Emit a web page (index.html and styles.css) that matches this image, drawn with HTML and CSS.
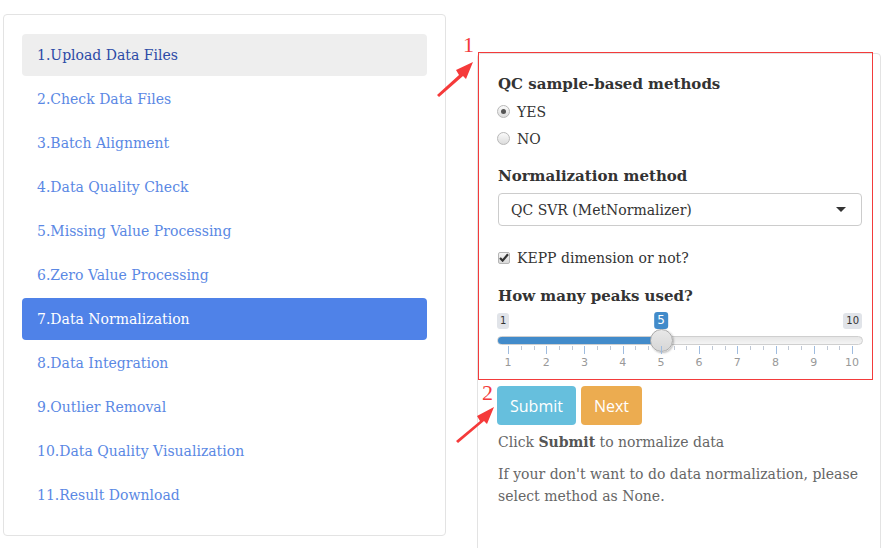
FILE: index.html
```html
<!DOCTYPE html>
<html>
<head>
<meta charset="utf-8">
<link rel="stylesheet" href="styles.css">
</head>
<body>
<div class="page">
  <div class="sidebar">
    <ul class="nav">
      <li class="nav-item first">1.Upload Data Files</li>
      <li class="nav-item">2.Check Data Files</li>
      <li class="nav-item">3.Batch Alignment</li>
      <li class="nav-item">4.Data Quality Check</li>
      <li class="nav-item">5.Missing Value Processing</li>
      <li class="nav-item">6.Zero Value Processing</li>
      <li class="nav-item active">7.Data Normalization</li>
      <li class="nav-item">8.Data Integration</li>
      <li class="nav-item">9.Outlier Removal</li>
      <li class="nav-item">10.Data Quality Visualization</li>
      <li class="nav-item">11.Result Download</li>
    </ul>
  </div>
  <div class="main">
    <div class="well">
      <div class="field-label">QC sample-based methods</div>
      <div class="radios">
        <label class="radio-row"><span class="radio checked"></span>YES</label>
        <label class="radio-row"><span class="radio"></span>NO</label>
      </div>
      <div class="field-label label2">Normalization method</div>
      <div class="select">
        <span>QC SVR (MetNormalizer)</span>
        <span class="caret"></span>
      </div>
      <label class="check-row">
        <span class="checkbox">
          <svg width="10" height="9" viewBox="0 0 10 9"><path d="M1 5 L3.6 7.6 L9 1.2" fill="none" stroke="#333" stroke-width="2.2"/></svg>
        </span>KEPP dimension or not?</label>
      <div class="field-label label3">How many peaks used?</div>
      <div class="slider">
        <span class="min-label">1</span>
        <span class="max-label">10</span>
        <span class="from-label" style="left: 163px">5</span>
        <div class="track"><div class="bar" style="width: 163px"></div></div>
        <div class="handle" style="left: 152px"></div>
        <div class="grid">
          <span class="tick major" style="left: 10px"></span><span class="tick" style="left: 22.7px"></span><span class="tick" style="left: 35.5px"></span>
          <span class="tick major" style="left: 48.2px"></span><span class="tick" style="left: 61px"></span><span class="tick" style="left: 73.7px"></span>
          <span class="tick major" style="left: 86.4px"></span><span class="tick" style="left: 99.2px"></span><span class="tick" style="left: 111.9px"></span>
          <span class="tick major" style="left: 124.7px"></span><span class="tick" style="left: 137.4px"></span><span class="tick" style="left: 150.1px"></span>
          <span class="tick major" style="left: 162.9px"></span><span class="tick" style="left: 175.6px"></span><span class="tick" style="left: 188.4px"></span>
          <span class="tick major" style="left: 201.1px"></span><span class="tick" style="left: 213.8px"></span><span class="tick" style="left: 226.6px"></span>
          <span class="tick major" style="left: 239.3px"></span><span class="tick" style="left: 252.1px"></span><span class="tick" style="left: 264.8px"></span>
          <span class="tick major" style="left: 277.6px"></span><span class="tick" style="left: 290.3px"></span><span class="tick" style="left: 303px"></span>
          <span class="tick major" style="left: 315.8px"></span><span class="tick" style="left: 328.5px"></span><span class="tick" style="left: 341.3px"></span>
          <span class="tick major" style="left: 354px"></span>
          <span class="num" style="left: 10px">1</span>
          <span class="num" style="left: 48.2px">2</span>
          <span class="num" style="left: 86.4px">3</span>
          <span class="num" style="left: 124.7px">4</span>
          <span class="num" style="left: 162.9px">5</span>
          <span class="num" style="left: 201.1px">6</span>
          <span class="num" style="left: 239.3px">7</span>
          <span class="num" style="left: 277.6px">8</span>
          <span class="num" style="left: 315.8px">9</span>
          <span class="num" style="left: 354px">10</span>
        </div>
      </div>
      <div class="buttons">
        <button class="btn btn-submit">Submit</button>
        <button class="btn btn-next">Next</button>
      </div>
      <p class="help">Click <b>Submit</b> to normalize data</p>
      <p class="help note">If your don't want to do data normalization, please select method as None.</p>

      <div class="redbox"></div>
      <span class="anno-num n1">1</span>
      <span class="anno-num n2">2</span>
      <svg class="arrow a1" width="50" height="50" viewBox="0 0 50 50">
        <polygon points="0,37 22,17 19,12 36,4 29,21 26,18 2,39" fill="#f53a3a"/>
      </svg>
      <svg class="arrow a2" width="50" height="50" viewBox="0 0 50 50">
        <polygon points="0,37 24,17 21,12 38,3 31,20 28,17 2,39" fill="#f53a3a"/>
      </svg>
    </div>
  </div>
</div>
</body>
</html>
```
FILE: styles.css
```css
* { box-sizing: border-box; }
html, body { margin: 0; padding: 0; background: #fff; }
body {
  font-family: "DejaVu Serif", "Liberation Serif", serif;
  font-size: 14px;
  color: #333;
  width: 883px;
  height: 548px;
  overflow: hidden;
}
.page {
  display: flex;
  align-items: flex-start;
  gap: 31px;
  padding: 14px 0 0 3px;
}
.sidebar {
  width: 443px;
  height: 522px;
  border: 1px solid #e3e3e3;
  border-radius: 4px;
  padding: 19px 18px 19px 18px;
  background: #fff;
}
.nav {
  list-style: none;
  margin: 0;
  padding: 0;
  display: flex;
  flex-direction: column;
  gap: 2px;
}
.nav-item {
  height: 42px;
  line-height: 42px;
  padding-left: 15px;
  border-radius: 4px;
  color: #5a88e4;
}
.nav-item.first {
  background: #eeeeee;
  color: #2c4aa6;
}
.nav-item.active {
  background: #4f82e8;
  color: #fff;
}
.main {
  width: 404px;
  margin-top: 39px;
}
.well {
  position: relative;
  height: 520px;
  border: 1px solid #e3e3e3;
  border-radius: 4px;
  background: #fff;
  padding: 19px 18px 0 20px;
}
.field-label {
  font-weight: bold;
  font-size: 15px;
  line-height: 22px;
}
.label2 { margin-top: 13px; }
.label3 { margin-top: 14px; }
.radios { margin-top: 3px; }
.radio-row, .check-row {
  display: flex;
  align-items: center;
  height: 27px;
  gap: 7px;
}
.radio {
  width: 13px;
  height: 13px;
  border-radius: 50%;
  border: 1px solid #b8b8b8;
  background: linear-gradient(#fafafa, #dcdcdc);
  position: relative;
  margin-left: -1px;
}
.radio.checked::after {
  content: "";
  position: absolute;
  left: 3px;
  top: 3px;
  width: 5px;
  height: 5px;
  border-radius: 50%;
  background: #555;
}
.select {
  margin-top: 6px;
  height: 33px;
  border: 1px solid #cccccc;
  border-radius: 4px;
  display: flex;
  align-items: center;
  justify-content: space-between;
  padding: 0 15px 0 12px;
}
.caret {
  width: 0;
  height: 0;
  border-left: 5px solid transparent;
  border-right: 5px solid transparent;
  border-top: 5px solid #333;
}
.check-row {
  margin-top: 18px;
}
.checkbox {
  width: 12px;
  height: 12px;
  border: 1px solid #b5b5b5;
  border-radius: 2px;
  background: linear-gradient(#f5f5f5, #d9d9d9);
  display: flex;
  align-items: center;
  justify-content: center;
}
.slider {
  position: relative;
  height: 67px;
  font-family: "DejaVu Sans", "Liberation Sans", sans-serif;
}
.min-label, .max-label, .from-label {
  position: absolute;
  top: 6px;
  height: 16px;
  line-height: 16px;
  font-size: 10px;
  padding: 0 3px;
  border-radius: 3px;
  background: #e1e4e9;
  color: #333;
}
.min-label { left: -1px; }
.max-label { right: 0; }
.from-label {
  top: 5px;
  height: 17px;
  line-height: 17px;
  font-size: 12px;
  background: #428bca;
  color: #fff;
  transform: translateX(-50%);
}
.track {
  position: absolute;
  left: -1px;
  right: -1px;
  top: 29px;
  height: 9px;
  border-radius: 5px;
  border: 1px solid #cfcfcf;
  background: linear-gradient(#e6e6e6, #f4f4f4);
  overflow: hidden;
}
.bar {
  height: 100%;
  background: #428bca;
}
.handle {
  position: absolute;
  top: 22px;
  width: 23px;
  height: 23px;
  border-radius: 50%;
  border: 1px solid #aaa;
  background: linear-gradient(#e8e8e8, #d6d6d6);
  box-shadow: 1px 1px 2px rgba(0,0,0,0.25);
}
.grid {
  position: absolute;
  left: 0;
  right: 0;
  top: 39px;
  height: 28px;
}
.tick {
  position: absolute;
  top: 0;
  width: 1px;
  height: 4px;
  background: #c0c8d4;
}
.tick.major {
  height: 8px;
  background: #9fbcdf;
}
.num {
  position: absolute;
  top: 11px;
  font-size: 11px;
  line-height: 12px;
  color: #999;
  transform: translateX(-50%);
}
.buttons {
  display: flex;
  gap: 5px;
  margin-top: 12px;
  margin-left: -1px;
}
.btn {
  height: 39px;
  border: none;
  border-radius: 4px;
  color: #fff;
  font-family: "Open Sans", "Liberation Sans", sans-serif;
  font-size: 16px;
  padding: 0 12px;
}
.btn-submit { background: #66bfdd; width: 79px; }
.btn-next { background: #ecac50; width: 61px; }
.help {
  margin: 6px 0 0 0;
  line-height: 22px;
  color: #666;
  font-size: 14px;
}
.help b { color: #555; }
.note { margin-top: 10px; }
.redbox {
  position: absolute;
  left: 0;
  top: -2px;
  width: 395px;
  height: 328px;
  border: 1px solid #f33b3b;
}
.anno-num {
  position: absolute;
  font-family: "Liberation Serif", serif;
  font-size: 22px;
  line-height: 22px;
  color: #f33b3b;
}
.n1 { left: -15px; top: -20px; }
.n2 { left: 4px; top: 328px; }
.arrow { position: absolute; }
.a1 { left: -41px; top: 4px; }
.a2 { left: -22px; top: 350px; }
```
